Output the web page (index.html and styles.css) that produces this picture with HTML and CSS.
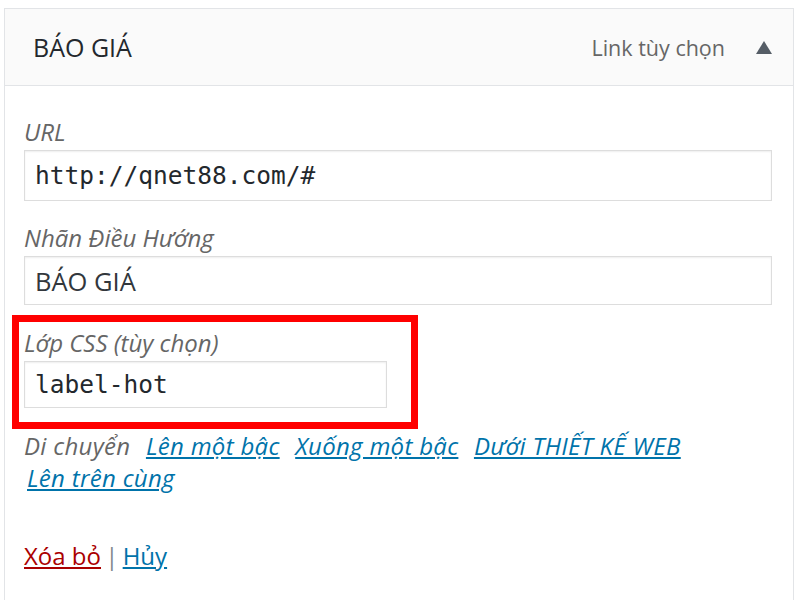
FILE: index.html
```html
<!DOCTYPE html>
<html lang="vi">
<head>
    <meta charset="UTF-8">
    <meta name="viewport" content="width=device-width, initial-scale=1.0">
    <title>BÁO GIÁ - Link tùy chọn</title>
    <link rel="stylesheet" href="styles.css">
</head>

<body>
    <div class="item">
        <div class="item-head">
            <span class="item-title">BÁO GIÁ</span>
            <span class="item-type">Link tùy chọn</span>
            <svg class="toggle" width="16" height="13" viewBox="0 0 16 13">
                <path d="M8 0 L16 13 L0 13 Z" fill="#555d66"/>
            </svg>
        </div>
        <div class="item-body">
            <div class="field">
                <label class="desc">URL</label>
                <input class="input code url" type="text" value="http://qnet88.com/#">
            </div>
            <div class="field">
                <label class="desc">Nhãn Điều Hướng</label>
                <input class="input name" type="text" value="BÁO GIÁ">
            </div>
            <div class="mark">
                <div class="field">
                    <label class="desc">Lớp CSS (tùy chọn)</label>
                    <input class="input code thin" type="text" value="label-hot">
                </div>
            </div>
            <p class="move desc">
                Di chuyển
                <a href="#">Lên một bậc</a>
                <a href="#">Xuống một bậc</a>
                <a href="#">Dưới THIẾT KẾ WEB</a>
                <a href="#">Lên trên cùng</a>
            </p>
            <p class="actions">
                <a class="delete" href="#">Xóa bỏ</a> <span class="sep">|</span> <a href="#">Hủy</a>
            </p>
        </div>
    </div>
</body>

</html>
```

FILE: styles.css
```css
body {
    margin: 0;
    background: #fff;
    font-family: "Open Sans", "Liberation Sans", sans-serif;
    color: #32373c;
}

.item {
    margin: 8px 6px 0 4px;
    height: 592px;
    box-sizing: border-box;
    border: 1px solid #e2e4e7;
    border-bottom: none;
}

.item-head {
    height: 76px;
    display: flex;
    align-items: center;
    background: #fafafa;
    border-bottom: 1px solid #e2e4e7;
}

.item-title {
    margin-left: 28px;
    font-size: 25px;
    color: #23282d;
    flex: 1;
}

.item-type {
    font-size: 21.5px;
    color: #666;
    margin-right: 31px;
}

.toggle {
    margin-right: 21px;
}

.item-body {
    padding: 31px 21px 0 19px;
}

.desc {
    font-style: italic;
    color: #666;
    font-size: 24px;
    line-height: 30px;
}

.field label {
    display: block;
    margin-bottom: 3px;
}

.field + .field {
    margin-top: 22px;
}

.input {
    display: block;
    box-sizing: border-box;
    width: 100%;
    height: 51px;
    margin: 0;
    padding: 0 10px;
    border: 1px solid #ddd;
    box-shadow: inset 0 1px 2px rgba(0, 0, 0, .07);
    background: #fff;
    font-family: "Open Sans", "Liberation Sans", sans-serif;
    font-size: 25.5px;
    color: #32373c;
    outline: none;
}

.input.code {
    font-family: "DejaVu Sans Mono", "Liberation Mono", monospace;
    font-size: 24.5px;
    color: #23282d;
}

.input.name {
    height: 49px;
}

.input.thin {
    width: 363px;
    height: 47px;
}

.mark {
    width: 406px;
    box-sizing: border-box;
    margin: 10px 0 0 -12px;
    padding: 6px 0 14px 5px;
    border: 7px solid #f00;
}

.move {
    margin: 1px 0 0;
    line-height: 32px;
    letter-spacing: 0.3px;
}

.move a {
    color: #0073aa;
    margin-left: 9px;
    white-space: nowrap;
}

.move a:last-child {
    margin-left: 3px;
}

.actions {
    margin: 46px 0 0;
    font-size: 24px;
    line-height: 32px;
    color: #82878c;
    word-spacing: -2px;
}

.actions a {
    color: #0073aa;
    word-spacing: 0;
}

.actions a.delete {
    color: #a00;
}
```
